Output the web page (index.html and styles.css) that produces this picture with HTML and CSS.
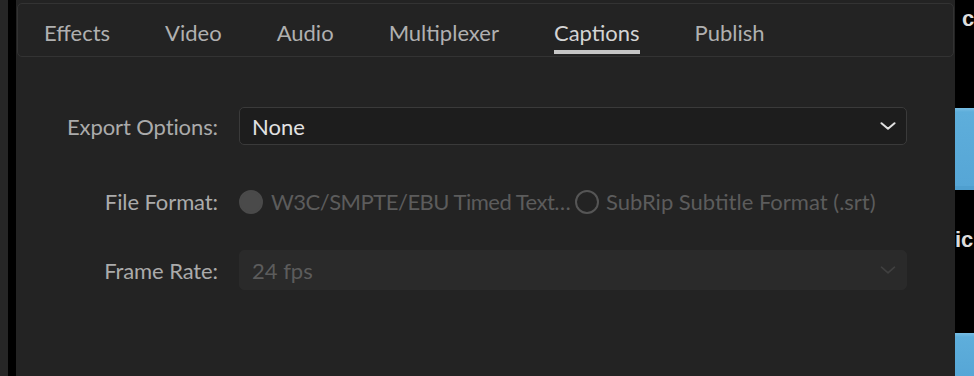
FILE: index.html
```html
<!DOCTYPE html>
<html lang="en">

<head>
    <meta charset="UTF-8" />
    <title>Export Settings - Captions</title>
    <link rel="stylesheet" href="styles.css">
</head>

<body>

    <div class="edge"></div>
    <div class="gutter"></div>

    <!-- Export settings panel -->
    <main class="panel">
        <nav class="tabs">
            <a href="#" class="tab">Effects</a>
            <a href="#" class="tab">Video</a>
            <a href="#" class="tab">Audio</a>
            <a href="#" class="tab">Multiplexer</a>
            <a href="#" class="tab active">Captions</a>
            <a href="#" class="tab">Publish</a>
        </nav>

        <form class="form">
            <div class="row row-export">
                <label class="label">Export Options:</label>
                <div class="select">
                    <span>None</span>
                    <svg class="chevron" width="16" height="8" viewBox="0 0 16 8">
                        <path d="M1.5 1.2 L8 6.8 L14.5 1.2" fill="none" stroke="currentColor" stroke-width="2" stroke-linecap="round" stroke-linejoin="round" />
                    </svg>
                </div>
            </div>

            <div class="row row-format">
                <span class="label">File Format:</span>
                <div class="radios">
                    <span class="radio radio-first"><span class="dot filled"></span>W3C/SMPTE/EBU Timed Text…</span>
                    <span class="radio"><span class="dot"></span>SubRip Subtitle Format (.srt)</span>
                </div>
            </div>

            <div class="row row-rate">
                <span class="label">Frame Rate:</span>
                <div class="select disabled">
                    <span>24 fps</span>
                    <svg class="chevron" width="16" height="8" viewBox="0 0 16 8">
                        <path d="M1.5 1.2 L8 6.8 L14.5 1.2" fill="none" stroke="currentColor" stroke-width="1.6" stroke-linecap="round" stroke-linejoin="round" />
                    </svg>
                </div>
            </div>
        </form>
    </main>

    <!-- Window behind the panel -->
    <aside class="backdrop">
        <div class="peek peek-top"><span class="stub"></span>c</div>
        <div class="blue blue-top"></div>
        <div class="peek peek-mid">ic</div>
        <div class="blue blue-bottom"></div>
    </aside>

</body>

</html>
```

FILE: styles.css
```css
* {
    box-sizing: border-box;
}

body {
    margin: 0;
    height: 376px;
    display: flex;
    overflow: hidden;
    background: #000;
    font-family: 'Lato', 'Open Sans', sans-serif;
}

.edge {
    width: 8px;
    background: #262626;
}

.gutter {
    width: 8px;
    background: #000;
}

.panel {
    width: 939px;
    background: #232323;
    padding-top: 3px;
}

/* Tabs */

.tabs {
    height: 54px;
    margin: 0 1px;
    display: flex;
    gap: 55px;
    padding: 0 0 2px 26px;
    border: 1px solid #333;
    border-radius: 5px;
}

.tab {
    display: flex;
    align-items: flex-end;
    padding-bottom: 6px;
    border-bottom: 4px solid transparent;
    color: #b0b0b0;
    text-decoration: none;
    font-size: 22px;
    line-height: 1;
}

.tab.active {
    color: #d4d4d4;
    border-bottom-color: #c6c6c6;
}

/* Form */

.form {
    padding-top: 50px;
}

.row {
    display: grid;
    grid-template-columns: 202px 668px;
    column-gap: 21px;
    align-items: center;
}

.label {
    text-align: right;
    color: #ababab;
    font-size: 22px;
    letter-spacing: -0.1px;
}

.row-export {
    height: 38px;
}

.row-format {
    height: 24px;
    margin-top: 43px;
}

.row-rate {
    height: 40px;
    margin-top: 38px;
}

.select {
    height: 100%;
    display: flex;
    align-items: center;
    justify-content: space-between;
    padding: 0 10px 0 12px;
    background: #1d1d1d;
    border: 1px solid #3a3a3a;
    border-radius: 5px;
    color: #e2e2e2;
    font-size: 22px;
}

.select.disabled {
    background: #2a2a2a;
    border-color: #2a2a2a;
    color: #5c5c5c;
}

.select.disabled .chevron {
    color: #404040;
}

.chevron {
    color: #e0e0e0;
}

.radios {
    display: flex;
    align-items: center;
    color: #5c5c5c;
    font-size: 22px;
}

.radio {
    display: flex;
    align-items: center;
    gap: 7px;
    white-space: nowrap;
}

.radio-first {
    width: 336px;
    gap: 8px;
    letter-spacing: -0.5px;
}

.dot {
    flex-shrink: 0;
    width: 24px;
    height: 24px;
    border-radius: 50%;
    border: 2px solid #555;
}

.dot.filled {
    background: #4a4a4a;
    border-color: #4a4a4a;
}

/* Backdrop window */

.backdrop {
    width: 19px;
    overflow: hidden;
    display: flex;
    flex-direction: column;
    font-family: 'Liberation Sans', Arial, sans-serif;
    font-weight: bold;
    font-size: 22px;
    color: #dcdcdc;
}

.peek {
    line-height: 22px;
    white-space: nowrap;
}

.peek-top {
    margin-top: 8px;
    display: flex;
    align-items: flex-end;
    gap: 7px;
}

.stub {
    width: 2px;
    height: 12px;
    margin-bottom: 5px;
    background: #bcbcbc;
}

.peek-mid {
    margin-top: 39px;
}

.blue {
    background: linear-gradient(#77bde3 0, #5eaedb 4px, #56a6d6 100%);
}

.blue-top {
    height: 82px;
    margin-top: 78px;
    border-bottom: 4px solid #4f9fcf;
}

.blue-bottom {
    flex: 1;
    margin-top: 82px;
}
```
